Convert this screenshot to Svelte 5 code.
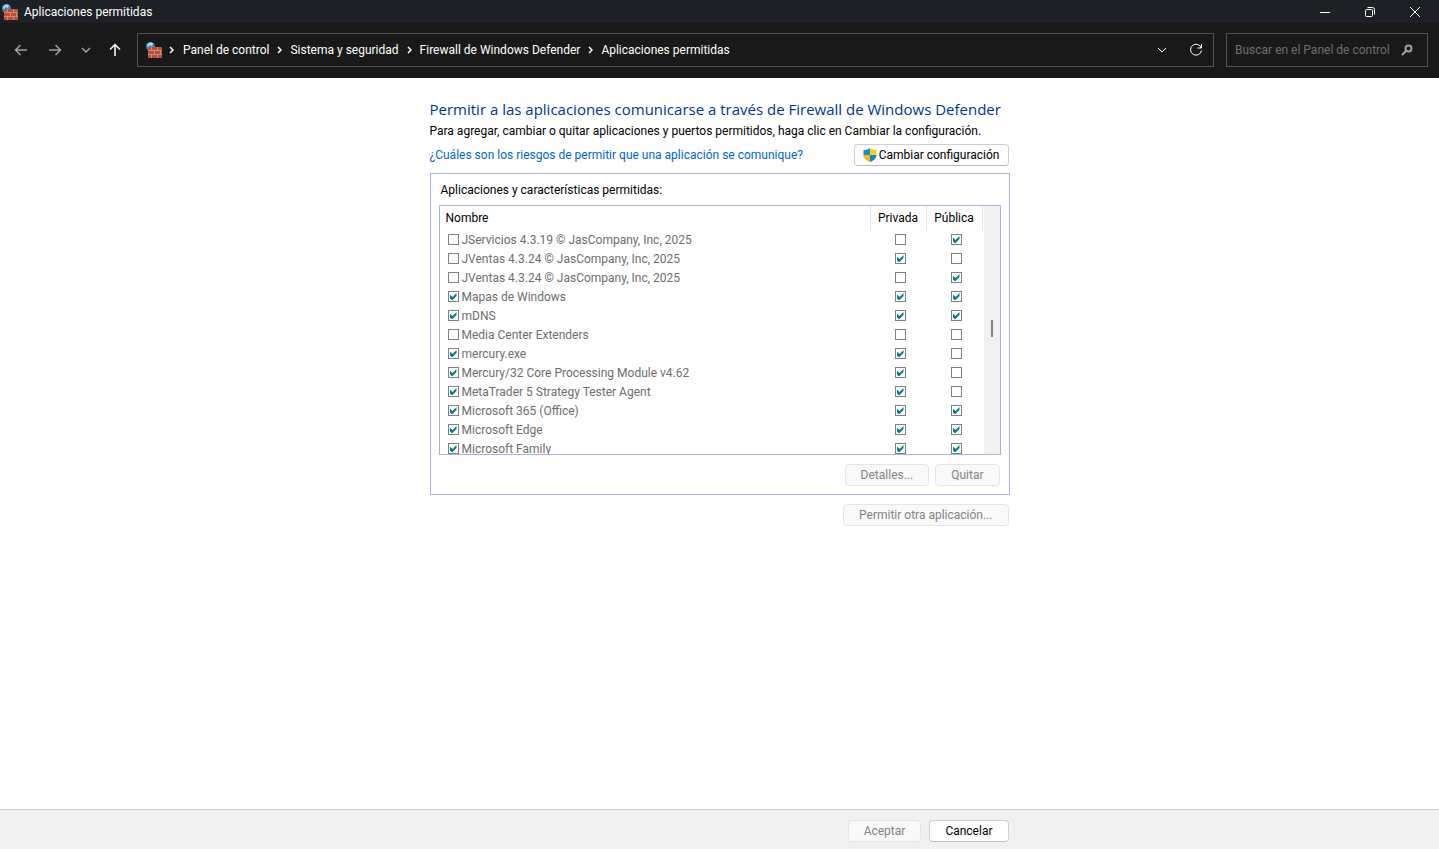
<script lang="ts">
	type App = { name: string; on: boolean; priv: boolean; pub: boolean };

	const crumbs = ["Panel de control", "Sistema y seguridad", "Firewall de Windows Defender", "Aplicaciones permitidas"];

	const apps: App[] = [
		{ name: "JServicios 4.3.19 © JasCompany, Inc, 2025", on: false, priv: false, pub: true },
		{ name: "JVentas 4.3.24 © JasCompany, Inc, 2025", on: false, priv: true, pub: false },
		{ name: "JVentas 4.3.24 © JasCompany, Inc, 2025", on: false, priv: false, pub: true },
		{ name: "Mapas de Windows", on: true, priv: true, pub: true },
		{ name: "mDNS", on: true, priv: true, pub: true },
		{ name: "Media Center Extenders", on: false, priv: false, pub: false },
		{ name: "mercury.exe", on: true, priv: true, pub: false },
		{ name: "Mercury/32 Core Processing Module v4.62", on: true, priv: true, pub: false },
		{ name: "MetaTrader 5 Strategy Tester Agent", on: true, priv: true, pub: false },
		{ name: "Microsoft 365 (Office)", on: true, priv: true, pub: true },
		{ name: "Microsoft Edge", on: true, priv: true, pub: true },
		{ name: "Microsoft Family", on: true, priv: true, pub: true },
	];
</script>

{#snippet firewall()}
	<svg class="firewall" width="16" height="16" viewBox="0 0 16 16" aria-hidden="true">
		<circle cx="4.500" cy="4.500" r="4.500" fill="#2f8fc4" />
		<path d="M1 3.500A4 4 0 0 1 7 1.200L6 4 3.500 3 2 5.500z" fill="#a9dcf2" />
		<rect x="2" y="5" width="14" height="11" fill="#d08a74" />
		<path
			d="M2 5h3v3H2zM6 5h5v3H6zM12 5h4v3h-4zM2 9h6v3H2zM9 9h5v3H9zM15 9h1v3h-1zM2 13h3v3H2zM6 13h5v3H6zM12 13h4v3h-4z"
			fill="#bb4f38"
		/>
	</svg>
{/snippet}

<div class="window">
	<header class="titlebar">
		{@render firewall()}
		<span class="title">Aplicaciones permitidas</span>
		<div class="controls">
			<button aria-label="Minimizar">
				<svg width="12" height="12" viewBox="0 0 12 12"><path d="M1 6.500h10" /></svg>
			</button>
			<button aria-label="Restaurar">
				<svg width="12" height="12" viewBox="0 0 12 12">
					<rect x="1.500" y="3.500" width="7" height="7" rx="1" />
					<path d="M3.500 1.500h5a2 2 0 0 1 2 2v5" />
				</svg>
			</button>
			<button aria-label="Cerrar">
				<svg width="12" height="12" viewBox="0 0 12 12"><path d="M1 1l10 10M11 1L1 11" /></svg>
			</button>
		</div>
	</header>

	<nav class="navbar">
		<div class="history">
			<button class="dim" aria-label="Atrás">
				<svg width="14" height="14" viewBox="0 0 14 14"><path d="M13 7H1.500M6.500 2L1.500 7l5 5" /></svg>
			</button>
			<button class="dim" aria-label="Adelante">
				<svg width="14" height="14" viewBox="0 0 14 14"><path d="M1 7h11.500M7.500 2l5 5-5 5" /></svg>
			</button>
			<button class="dim narrow" aria-label="Ubicaciones recientes">
				<svg width="10" height="10" viewBox="0 0 10 10"><path d="M1 3l4 4 4-4" /></svg>
			</button>
			<button class="up" aria-label="Subir">
				<svg width="14" height="14" viewBox="0 0 14 14"><path d="M7 13V1.500M2 6.500l5-5 5 5" /></svg>
			</button>
		</div>

		<div class="address">
			{@render firewall()}
			{#each crumbs as crumb}
				<svg class="sep" width="5" height="8" viewBox="0 0 5 8"><path d="M1 1l3 3-3 3" /></svg>
				<a href="/">{crumb}</a>
			{/each}
			<div class="address-end">
				<button aria-label="Ubicaciones anteriores">
					<svg width="10" height="10" viewBox="0 0 10 10"><path d="M1 3l4 4 4-4" /></svg>
				</button>
				<button aria-label="Actualizar">
					<svg width="14" height="14" viewBox="0 0 14 14">
						<path d="M12.300 5A5.500 5.500 0 1 0 12.500 7.500M12.500 1v4h-4" />
					</svg>
				</button>
			</div>
		</div>

		<div class="search">
			<input type="text" placeholder="Buscar en el Panel de control" aria-label="Buscar en el Panel de control" />
			<svg width="12" height="12" viewBox="0 0 12 12" aria-hidden="true">
				<circle cx="7.500" cy="4.500" r="3" />
				<path d="M5.500 6.500L1 11" />
			</svg>
		</div>
	</nav>

	<main>
		<div class="column">
			<h1>Permitir a las aplicaciones comunicarse a través de Firewall de Windows Defender</h1>
			<p>Para agregar, cambiar o quitar aplicaciones y puertos permitidos, haga clic en Cambiar la configuración.</p>
			<div class="risks">
				<a href="/">¿Cuáles son los riesgos de permitir que una aplicación se comunique?</a>
				<button class="btn shielded">
					<svg width="14" height="14" viewBox="0 0 14 14" aria-hidden="true">
						<path d="M7 0C5 1.500 3 2 0.500 2v5H7z" fill="#1c8ad6" />
						<path d="M7 0c2 1.500 4 2 6.500 2v5H7z" fill="#ffd11a" />
						<path d="M0.500 7H7v7C3 12.500 0.500 10.500 0.500 7z" fill="#fdb913" />
						<path d="M13.500 7H7v7c4-1.500 6.500-3.500 6.500-7z" fill="#1583d0" />
					</svg>
					Cambiar configuración
				</button>
			</div>

			<section class="group">
				<h2>Aplicaciones y características permitidas:</h2>
				<div class="list">
					<table>
						<thead>
							<tr>
								<th class="name">Nombre</th>
								<th>Privada</th>
								<th>Pública</th>
							</tr>
						</thead>
						<tbody>
							{#each apps as app}
								<tr>
									<td class="name">
										<label><input type="checkbox" checked={app.on} disabled />{app.name}</label>
									</td>
									<td><input type="checkbox" checked={app.priv} disabled aria-label="Privada" /></td>
									<td><input type="checkbox" checked={app.pub} disabled aria-label="Pública" /></td>
								</tr>
							{/each}
						</tbody>
					</table>
					<div class="scrollbar"><div class="thumb"></div></div>
				</div>
				<div class="actions">
					<button class="btn" disabled>Detalles...</button>
					<button class="btn" disabled>Quitar</button>
				</div>
			</section>
			<div class="other">
				<button class="btn" disabled>Permitir otra aplicación...</button>
			</div>
		</div>
	</main>

	<footer>
		<div class="column buttons">
			<button class="btn" disabled>Aceptar</button>
			<button class="btn">Cancelar</button>
		</div>
	</footer>
</div>

<style>
	.window {
		min-height: 100vh;
		display: flex;
		flex-direction: column;
		background: #fff;
		color: #000;
		font: 12px/16px "Segoe UI", Roboto, sans-serif;
	}
	button,
	input {
		font: inherit;
	}
	svg {
		flex: none;
		fill: none;
		stroke: currentColor;
	}
	.firewall,
	.shielded svg {
		stroke: none;
	}

	.titlebar {
		display: flex;
		align-items: center;
		height: 23px;
		padding: 0 2px;
		background: #1d2125;
		color: #fff;
	}
	.title {
		margin-left: 6px;
	}
	.controls {
		display: flex;
		margin-left: auto;
	}
	.titlebar button,
	.navbar button {
		display: flex;
		align-items: center;
		justify-content: center;
		padding: 0;
		border: 0;
		background: none;
		color: inherit;
	}
	.controls button {
		width: 45px;
		height: 20px;
	}

	.navbar {
		display: flex;
		align-items: center;
		gap: 12px;
		height: 53px;
		padding: 0 11px 2px 0;
		background: #191919;
		color: #fff;
	}
	.history {
		display: flex;
		padding-left: 4px;
		margin-right: -4px;
	}
	.history button {
		width: 34px;
		height: 32px;
	}
	.history .narrow {
		width: 28px;
	}
	.history .up {
		width: 29px;
	}
	.history .dim {
		color: #a0a0a0;
	}
	.history svg {
		stroke-width: 1.5;
	}
	.address,
	.search {
		display: flex;
		align-items: center;
		box-sizing: border-box;
		height: 34px;
		border: 1px solid #535353;
	}
	.address {
		flex: 1;
		padding-left: 8px;
	}
	.address a {
		color: #fff;
		text-decoration: none;
		white-space: nowrap;
	}
	.sep {
		margin: 0 8px;
		stroke-width: 1.5;
	}
	.firewall + .sep {
		margin: 0 9px 0 7px;
	}
	.address-end {
		display: flex;
		margin-left: auto;
	}
	.address-end button {
		width: 34px;
		height: 32px;
	}
	.search {
		width: 202px;
		padding: 0 14px 0 8px;
		color: #a0a0a0;
	}
	.search input {
		flex: 1;
		min-width: 0;
		padding: 0;
		border: 0;
		outline: 0;
		background: none;
		color: #fff;
	}
	.search input::placeholder {
		color: #6e6e6e;
		opacity: 1;
	}
	.search svg {
		stroke-width: 2;
	}

	main {
		flex: 1;
		padding: 20px 0;
	}
	.column {
		width: 580px;
		max-width: 100%;
		margin: 0 auto;
	}
	h1 {
		margin: 0;
		color: #003399;
		font-family: "Segoe UI", "Open Sans", sans-serif;
		font-size: 15px;
		font-weight: 400;
		line-height: 22px;
		white-space: nowrap;
	}
	p {
		margin: 3px 0 5px;
		white-space: nowrap;
	}
	.risks {
		display: flex;
		align-items: center;
		justify-content: space-between;
		padding-right: 1px;
	}
	.risks a {
		color: #0066cc;
		text-decoration: none;
	}
	.btn {
		height: 22px;
		padding: 0 15px;
		border: 1px solid #d0d0d0;
		border-bottom-color: #bcbcbc;
		border-radius: 4px;
		background: #fdfdfd;
		color: #000;
		white-space: nowrap;
	}
	.btn:disabled {
		border-color: #e5e5e5;
		background: #f9f9f9;
		color: #838383;
	}
	.shielded {
		display: flex;
		align-items: center;
		gap: 2px;
		padding: 0 8px;
	}

	.group {
		margin-top: 7px;
		padding: 8px;
		border: 1px solid #aeaedc;
	}
	h2 {
		margin: 0 0 7px 2px;
		font-size: 12px;
		font-weight: 400;
		line-height: 16px;
	}
	.list {
		display: flex;
		height: 248px;
		overflow: hidden;
		border: 1px solid #a9b0da;
	}
	table {
		flex: 1;
		table-layout: fixed;
		border-collapse: collapse;
		height: max-content;
		margin-right: 1px;
	}
	th,
	td {
		width: 56px;
		box-sizing: border-box;
		padding: 0;
		text-align: center;
	}
	th {
		height: 24px;
		border-right: 1px solid #e5e5e5;
		font-weight: 400;
	}
	td {
		height: 19px;
		padding-left: 4px;
		color: #6d6d6d;
	}
	.name {
		width: auto;
		padding-left: 6px;
		text-align: left;
	}
	td.name {
		padding-left: 8px;
	}
	label {
		display: flex;
		align-items: center;
		gap: 3px;
	}
	input[type="checkbox"] {
		appearance: none;
		display: block;
		box-sizing: border-box;
		width: 11px;
		height: 11px;
		margin: 0 auto;
		border: 1px solid #808080;
		background: #fff;
	}
	label input[type="checkbox"] {
		margin: 0;
	}
	input[type="checkbox"]:checked::before {
		content: "";
		display: block;
		width: 7px;
		height: 7px;
		margin: 1px;
		background: #008080;
		clip-path: polygon(0 29%, 14% 29%, 43% 57%, 86% 14%, 100% 0, 100% 43%, 43% 100%, 29% 100%, 0 71%);
	}
	.scrollbar {
		width: 16px;
		background: #f0f0f0;
	}
	.thumb {
		width: 2px;
		height: 17px;
		margin: 114px auto 0;
		background: #858585;
	}
	.actions {
		display: flex;
		justify-content: flex-end;
		gap: 6px;
		padding: 9px 1px 0 0;
	}
	.other {
		display: flex;
		justify-content: flex-end;
		padding: 9px 1px 0 0;
	}

	footer {
		padding: 10px 0 7px;
		border-top: 1px solid #d0d0d0;
		background: #f0f0f0;
	}
	.buttons {
		display: flex;
		justify-content: flex-end;
		gap: 8px;
		box-sizing: border-box;
		padding-right: 1px;
	}
</style>
